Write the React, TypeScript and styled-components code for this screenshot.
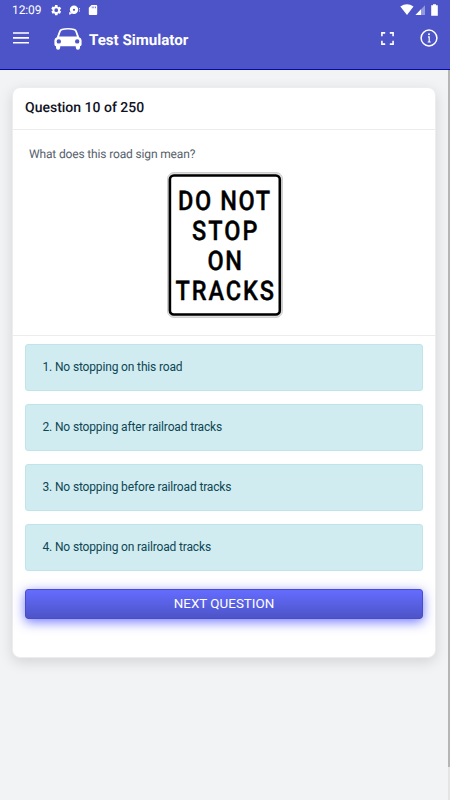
import React from "react";
import styled, { createGlobalStyle } from "styled-components";

const GlobalStyle = createGlobalStyle`
  *, *::before, *::after { box-sizing: border-box; }
  html, body { margin: 0; height: 100%; overflow: hidden; background: #f2f3f5; }
  body { font-family: Roboto, "Liberation Sans", sans-serif; text-rendering: geometricPrecision; }
  svg { display: block; flex: none; }
`;

const Screen = styled.div`
  position: relative;
  width: 450px;
  height: 800px;
  overflow: hidden;
  background: #f2f3f5;
`;

const Header = styled.header`
  height: 70px;
  background: #4d54c7;
  border-bottom: 1px solid #0508a2;
  color: #fff;
`;

const StatusBar = styled.div`
  display: flex;
  align-items: center;
  height: 19px;
  padding: 1px 11px 0 12px;
`;

const Clock = styled.span`
  width: 38px;
  font-size: 12px;
  line-height: 18px;
  letter-spacing: -0.1px;
`;

const Spacer = styled.div`
  flex: 1;
`;

const Toolbar = styled.div`
  display: flex;
  align-items: center;
  height: 38px;
  padding: 0 12px 0 13px;
`;

const Logo = styled.div`
  margin: 2px 7px 0 25px;
`;

const Title = styled.h1`
  margin: 0;
  padding-top: 3px;
  font-size: 15.1px;
  line-height: 20px;
  font-weight: 700;
  white-space: nowrap;
`;

const InfoSlot = styled.div`
  margin-left: 26px;
`;

const Card = styled.main`
  display: flex;
  flex-direction: column;
  width: 424px;
  height: 571px;
  margin: 17px 0 0 12px;
  background: #fff;
  border: 1px solid #ededee;
  border-radius: 8px;
  box-shadow: 0 4px 14px rgba(0, 0, 0, 0.13);
`;

const CardHeader = styled.h2`
  height: 42px;
  margin: 0;
  padding: 0 12px;
  border-bottom: 1px solid #ebecee;
  color: #10131f;
  font-size: 14px;
  line-height: 40px;
  font-weight: 500;
`;

const Prompt = styled.section`
  height: 206px;
  padding: 15px 0 0 16px;
  border-bottom: 1px solid #ebecee;
`;

const PromptText = styled.p`
  margin: 0;
  height: 27px;
  color: #56616c;
  font-size: 12px;
  line-height: 18px;
  letter-spacing: -0.15px;
`;

const SignSlot = styled.div`
  margin-left: 138px;
`;

const Answers = styled.div`
  display: flex;
  flex-direction: column;
  gap: 13px;
  padding: 8px 12px 0;
`;

const Answer = styled.button`
  height: 47px;
  padding: 0 16.5px 2px;
  background: #d1ecf0;
  border: 1px solid #bee5ea;
  border-radius: 3px;
  color: #0c4654;
  font: 400 12px/18px Roboto, "Liberation Sans", sans-serif;
  letter-spacing: -0.15px;
  text-align: left;
`;

const NextButton = styled.button`
  height: 30px;
  margin: 18px 12px 0;
  padding: 0;
  background: linear-gradient(#646cff, #4d54c7);
  border: 1px solid #474ec8;
  border-radius: 3px;
  box-shadow: 0 3px 12px rgba(70, 78, 255, 0.75);
  color: #fff;
  font: 400 13.4px/28px Roboto, "Liberation Sans", sans-serif;
`;

const ScrollTrack = styled.div`
  position: absolute;
  top: 70px;
  right: 0;
  width: 2px;
  height: 730px;
  background: #e4e4e5;
`;

const ScrollThumb = styled.div`
  height: 697px;
  background: #b5b5b6;
`;

const signLines = [
  { text: "DO NOT", x: 11, y: 37.5, width: 92 },
  { text: "STOP", x: 25, y: 67.5, width: 65.5 },
  { text: "ON", x: 40.5, y: 97.5, width: 34.5 },
  { text: "TRACKS", x: 8.5, y: 127.5, width: 98.5 },
];

const SIGN_SQUEEZE = 0.87;

const Sign = () => (
  <svg width="116" height="146" viewBox="0 0 116 146" role="img">
    <rect x="0.5" y="0.5" width="115" height="145" rx="6.5" fill="#dedede" stroke="#cfcfcf" />
    <rect x="2.9" y="3.5" width="109.9" height="139" rx="4" fill="#fff" stroke="#000" strokeWidth="2.6" />
    <g
      transform={`scale(${SIGN_SQUEEZE} 1)`}
      fill="#000"
      stroke="#000"
      strokeWidth="0.4"
      fontFamily="Roboto, sans-serif"
      fontSize="27"
      fontWeight="500"
    >
      {signLines.map((l) => (
        <text key={l.text} x={l.x / SIGN_SQUEEZE} y={l.y} textLength={l.width / SIGN_SQUEEZE}>
          {l.text}
        </text>
      ))}
    </g>
  </svg>
);

const Car = () => (
  <svg width="28" height="22" viewBox="0 0 28 22" fill="#fff">
    <path
      fillRule="evenodd"
      d="M2.8 9.2 5.1 3.1Q5.7 1.3 7.7.8Q10.5.1 14 .1T20.3.8Q22.3 1.3 22.9 3.1L25.2 9.2Q27.6 10.2 27.6 12.5V16.2Q27.6 18 26 18.2V19.4Q26 21.7 23.9 21.7T21.8 19.4V18.3H6.2V19.4Q6.2 21.7 4.1 21.7T2 19.4V18.2Q.4 18 .4 16.2V12.5Q.4 10.2 2.8 9.2ZM5.1 8.5H22.9L21.3 3.7Q20.9 2.6 19.6 2.3Q17.4 1.4 14 1.4T8.4 2.3Q7.1 2.6 6.7 3.7ZM4.8 11.2A2.2 2.2 0 1 0 4.8 15.6A2.2 2.2 0 1 0 4.8 11.2ZM23.2 11.2A2.2 2.2 0 1 0 23.2 15.6A2.2 2.2 0 1 0 23.2 11.2Z"
    />
  </svg>
);

const StatusIcons = () => (
  <svg width="50" height="14" viewBox="50 3 50 14" fill="#fff">
    <g transform="translate(50 4) scale(.52)">
      <path d="M19.14 12.94c.04-.3.06-.61.06-.94s-.02-.64-.07-.94l2.03-1.58a.49.49 0 0 0 .12-.61l-1.92-3.32a.49.49 0 0 0-.59-.22l-2.39.96a7 7 0 0 0-1.62-.94l-.36-2.54A.48.48 0 0 0 13.92 2h-3.84a.48.48 0 0 0-.48.41l-.36 2.54a7 7 0 0 0-1.62.94l-2.39-.96a.49.49 0 0 0-.59.22L2.74 8.87a.49.49 0 0 0 .12.61l2.03 1.58a6 6 0 0 0 0 1.88l-2.03 1.58a.49.49 0 0 0-.12.61l1.92 3.32c.12.22.37.29.59.22l2.39-.96c.5.38 1.03.7 1.62.94l.36 2.54c.05.24.24.41.48.41h3.84c.24 0 .44-.17.48-.41l.36-2.54a7 7 0 0 0 1.62-.94l2.39.96c.22.08.47 0 .59-.22l1.92-3.32a.49.49 0 0 0-.12-.61ZM12 15.6a3.6 3.6 0 1 1 0-7.2 3.6 3.6 0 0 1 0 7.2Z" />
    </g>
    <path fillRule="evenodd" d="M74 5.6a4.2 4.2 0 1 0 0 8.4 4.2 4.2 0 1 0 0-8.4ZM74 8.7a1.1 1.1 0 1 1 0 2.2 1.1 1.1 0 1 1 0-2.2Z" />
    <path d="M69.2 12.2h1.5l1.3 1.5-2.8 1ZM79 8.2h1v1h-1ZM79 10.5h1v1h-1Z" />
    <path fillRule="evenodd" d="M91.5 5h4.8q.9 0 .9.9v8.2q0 .9-.9.9h-6.6q-.9 0-.9-.9V7.8ZM91.8 6.6v1.7h.7V6.6ZM93.5 6.6v1.7h.7V6.6ZM95.2 6.6v1.7h.7V6.6Z" />
  </svg>
);

const SignalIcons = () => (
  <svg width="40" height="14" viewBox="399 3 40 14" fill="#fff">
    <path d="M400.3 6.5Q407 1.8 413.5 6.5L407 15Z" />
    <path opacity=".4" d="M425 5.3V15H415.5Z" />
    <path d="M421 9.3V15H415.5Z" />
    <path d="M431.2 5.2H433V4.2H436V5.2H437.8V15.8H431.2Z" />
  </svg>
);

const Menu = () => (
  <svg width="16" height="12" viewBox="0 0 16 12" fill="#fff">
    <path d="M0 .2h16v1.6H0ZM0 5.1h16v1.6H0ZM0 10h16v1.6H0Z" />
  </svg>
);

const Fullscreen = () => (
  <svg width="13" height="13" viewBox="0 0 13 13" fill="none" stroke="#fff" strokeWidth="1.6">
    <path d="M.9 4.2V.9H4.2M8.8.9H12.1V4.2M12.1 8.8V12.1H8.8M4.2 12.1H.9V8.8" />
  </svg>
);

const Info = () => (
  <svg width="18" height="18" viewBox="0 0 18 18" fill="none" stroke="#fff" strokeWidth="1.5">
    <circle cx="9" cy="9" r="7.9" />
    <path d="M8 7.9H9.2V13M7.7 13H10.7" strokeWidth="1.2" />
    <circle cx="9" cy="5.2" r="1" fill="#fff" stroke="none" />
  </svg>
);

const answers = [
  "No stopping on this road",
  "No stopping after railroad tracks",
  "No stopping before railroad tracks",
  "No stopping on railroad tracks",
];

export default function App() {
  return (
    <>
      <GlobalStyle />
      <Screen>
        <Header>
          <StatusBar>
            <Clock>12:09</Clock>
            <StatusIcons />
            <Spacer />
            <SignalIcons />
          </StatusBar>
          <Toolbar>
            <Menu />
            <Logo>
              <Car />
            </Logo>
            <Title>Test Simulator</Title>
            <Spacer />
            <Fullscreen />
            <InfoSlot>
              <Info />
            </InfoSlot>
          </Toolbar>
        </Header>
        <Card>
          <CardHeader>Question 10 of 250</CardHeader>
          <Prompt>
            <PromptText>What does this road sign mean?</PromptText>
            <SignSlot>
              <Sign />
            </SignSlot>
          </Prompt>
          <Answers>
            {answers.map((answer, i) => (
              <Answer key={answer}>
                {i + 1}. {answer}
              </Answer>
            ))}
          </Answers>
          <NextButton>NEXT QUESTION</NextButton>
        </Card>
        <ScrollTrack>
          <ScrollThumb />
        </ScrollTrack>
      </Screen>
    </>
  );
}
